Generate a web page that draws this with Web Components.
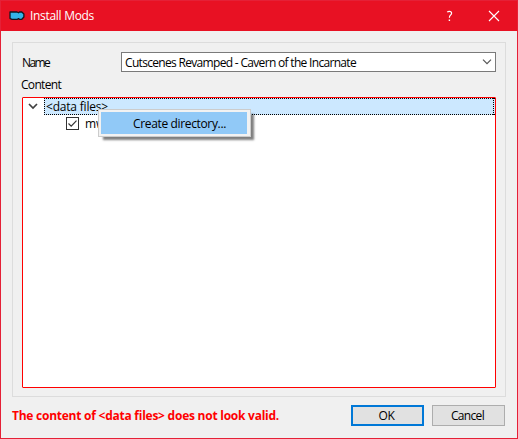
<!DOCTYPE html>
<html lang="en"><head><meta charset="utf-8"><title>Install Mods</title>
<style>
html,body{margin:0;height:100%;overflow:hidden}
body{font:12px/16px "Open Sans","Noto Sans",sans-serif;color:#000}
</style></head><body>
<install-dialog></install-dialog>
<script>
const define=(name,html,setup)=>customElements.define(name,class extends HTMLElement{
  connectedCallback(){
    if(this.shadowRoot)return;
    const t=document.createElement('template');t.innerHTML=html;
    this.attachShadow({mode:'open'}).append(t.content.cloneNode(true));
    if(setup)setup(this);
  }
});

/* Label whose tracking is adjusted so that the text spans a given width. */
define('fit-label',`<style>:host{display:block;white-space:pre;line-height:16px}span{display:inline-block}</style><span></span>`,el=>{
  const s=el.shadowRoot.querySelector('span');
  s.textContent=el.getAttribute('text');
  const w=+el.getAttribute('width');
  if(w)s.style.letterSpacing=(w-s.getBoundingClientRect().width)/s.textContent.length+'px';
});

define('title-bar',`<style>
:host{display:flex;height:30px;box-sizing:border-box;background:#e81123;color:#fff;align-items:center;padding:0 17px 0 8px}
svg{display:block}.logo{margin-right:5px}fit-label{flex:1}.help{margin-right:34px}
</style>
<svg class="logo" width="16" height="16" viewBox="0 0 16 16"><path d="M1 4H8L9.500 4.800L10.500 4H12.800L14.900 6V9L12.800 11.300H10.500L9.500 10.600L8.500 11.300H3L1 10.500z" fill="#35b4e8" stroke="#111820" stroke-width="1.300" stroke-linejoin="round"/></svg>
<fit-label text="Install Mods" width="64"></fit-label>
<svg class="help" width="8" height="12" viewBox="0 0 8 12"><path d="M1.200 2.200Q2 1.300 3.400 1.300Q5.600 1.300 5.600 3.200Q5.600 4.300 4.400 5.200Q3.400 6 3.400 7.800" fill="none" stroke="#fff" stroke-width="1.200"/><path d="M2.700 9.500h1.400v1.500h-1.400z" fill="#fff"/></svg>
<svg width="12" height="12" viewBox="0 0 12 12"><path d="M1 1L11 11M11 1L1 11" stroke="#fff" stroke-width="1.100"/></svg>`);

define('combo-box',`<style>
:host{display:flex;box-sizing:border-box;width:375px;height:20px;border:1px solid #7a7a7a;background:#fff;align-items:center;justify-content:space-between;padding:0 3px}
</style><slot></slot><svg width="10" height="6" viewBox="0 0 10 6"><path d="M1 .7l4 4 4-4" fill="none" stroke="#555" stroke-width="1.200"/></svg>`);

define('file-tree',`<style>
:host{display:block;box-sizing:border-box;width:474px;height:291px;border:1px solid #f00;border-radius:1px;background:#fff}
.row{display:flex;height:17px}
.arrow{width:21px}.arrow svg{display:block;margin:5px 0 0 5px}
.sel{flex:1;background:#cce8ff;position:relative}
.sel svg{position:absolute;inset:0;width:100%;height:100%}
.sel fit-label{padding:1px 0 0 2px}
.child{padding-left:43px;gap:6px;align-items:center}
.child svg{display:block}
</style>
<div class="row"><div class="arrow"><svg width="10" height="7" viewBox="0 0 10 7"><path d="M1 1l4 4 4-4" fill="none" stroke="#404040" stroke-width="1.700"/></svg></div>
<div class="sel"><fit-label text="&lt;data files&gt;" width="62"></fit-label><svg><path d="M0 .5H451M0 16.500H451M.5 0V17M449.500 0V17" stroke="#000" stroke-dasharray="1 1" shape-rendering="crispEdges"/></svg></div></div>
<div class="row child"><svg width="13" height="13" viewBox="0 0 13 13"><rect x=".5" y=".5" width="12" height="12" fill="#fff" stroke="#333"/><path d="M2.500 6.500l2.700 2.700 5.300-5.500" fill="none" stroke="#333" stroke-width="1.200"/></svg><fit-label text="mw"></fit-label></div>`);

define('push-button',`<style>
:host{display:flex;box-sizing:border-box;width:73px;height:21px;border:1px solid #adadad;background:#e1e1e1;align-items:center;justify-content:center;padding-right:2px}
:host([primary]){border:2px solid #0078d7}
</style><slot></slot>`);

define('context-menu',`<style>
:host{position:absolute;left:98px;top:109px;box-sizing:border-box;width:153px;height:28px;border:1px solid #ccc;background:#f2f2f2;padding:2px 3px 2px 2px;box-shadow:4px 4px 2px -1px rgba(0,0,0,.5)}
.item{background:#91c9f7;height:22px;display:flex;align-items:center;padding:1px 0 0 32px;box-sizing:border-box}
</style><div class="item"><slot></slot></div>`);

define('install-dialog',`<style>
:host{display:flex;flex-direction:column;box-sizing:border-box;width:518px;height:439px;border:1px solid #e52036;background:#f0f0f0;position:relative}
.group{box-sizing:border-box;margin:11px 11px 0;width:494px;height:355px;border:1px solid #dcdcdc;padding:9px}
.name{display:flex;justify-content:space-between;align-items:center;height:20px}
.name>fit-label{padding-top:1px}
combo-box fit-label{padding-top:1px}
.content{margin:5px 0 4px -1px;height:16px}
.foot{display:flex;align-items:center;padding:8px 12px 0 11px;gap:8px}
.err{flex:1;color:#f00;font-weight:700}
context-menu{margin:-1px 0 0 -1px}
</style>
<title-bar></title-bar>
<div class="group">
<div class="name"><fit-label text="Name" width="27"></fit-label><combo-box><fit-label text="Cutscenes Revamped - Cavern of the Incarnate" width="231"></fit-label></combo-box></div>
<fit-label class="content" text="Content" width="40"></fit-label>
<file-tree></file-tree>
</div>
<div class="foot"><fit-label class="err" text="The content of &lt;data files&gt; does not look valid." width="267"></fit-label>
<push-button primary><fit-label text="OK" width="16"></fit-label></push-button><push-button><fit-label text="Cancel" width="33"></fit-label></push-button></div>
<context-menu><fit-label text="Create directory..." width="93"></fit-label></context-menu>`);
</script></body></html>
